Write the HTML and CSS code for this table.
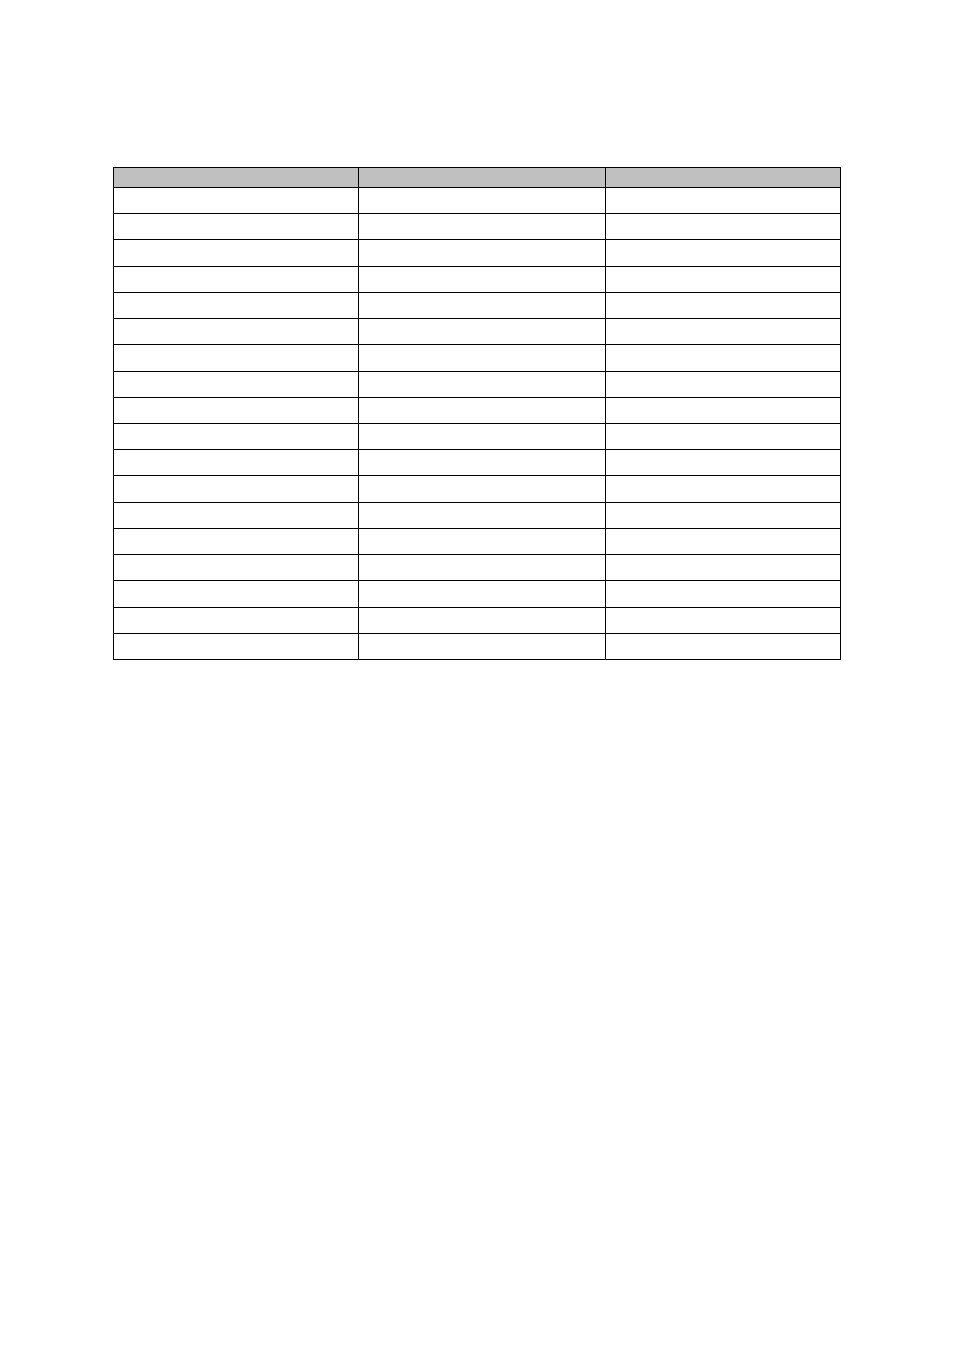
FILE: index.html
```html
<!DOCTYPE html>
<html>
<head>
<meta charset="utf-8">
<link rel="stylesheet" href="styles.css">
</head>
<body>
<div class="page">
<table class="grid">
<colgroup><col class="c1"><col class="c2"><col class="c3"></colgroup>
<thead><tr class="head"><th></th><th></th><th></th></tr></thead>
<tbody>
<tr><td></td><td></td><td></td></tr>
<tr><td></td><td></td><td></td></tr>
<tr><td></td><td></td><td></td></tr>
<tr><td></td><td></td><td></td></tr>
<tr><td></td><td></td><td></td></tr>
<tr><td></td><td></td><td></td></tr>
<tr><td></td><td></td><td></td></tr>
<tr><td></td><td></td><td></td></tr>
<tr><td></td><td></td><td></td></tr>
<tr><td></td><td></td><td></td></tr>
<tr><td></td><td></td><td></td></tr>
<tr><td></td><td></td><td></td></tr>
<tr><td></td><td></td><td></td></tr>
<tr><td></td><td></td><td></td></tr>
<tr><td></td><td></td><td></td></tr>
<tr><td></td><td></td><td></td></tr>
<tr><td></td><td></td><td></td></tr>
<tr><td></td><td></td><td></td></tr>
</tbody>
</table>
</div>
</body>
</html>
```
FILE: styles.css
```css
html, body {
  margin: 0;
  padding: 0;
  background: #ffffff;
  font-family: "Liberation Sans", Arial, sans-serif;
}
.page {
  width: 954px;
  height: 1350px;
  padding: 167px 0 0 113px;
  box-sizing: border-box;
}
.grid {
  border-collapse: collapse;
  table-layout: fixed;
  width: 727px;
}
.c1 { width: 245px; }
.c2 { width: 247px; }
.c3 { width: 235px; }
.grid th, .grid td {
  border: 1px solid #000;
  padding: 0;
}
.head th {
  background: #c0c0c0;
  height: 19px;
}
.grid td {
  height: 25.22px;
}
```
